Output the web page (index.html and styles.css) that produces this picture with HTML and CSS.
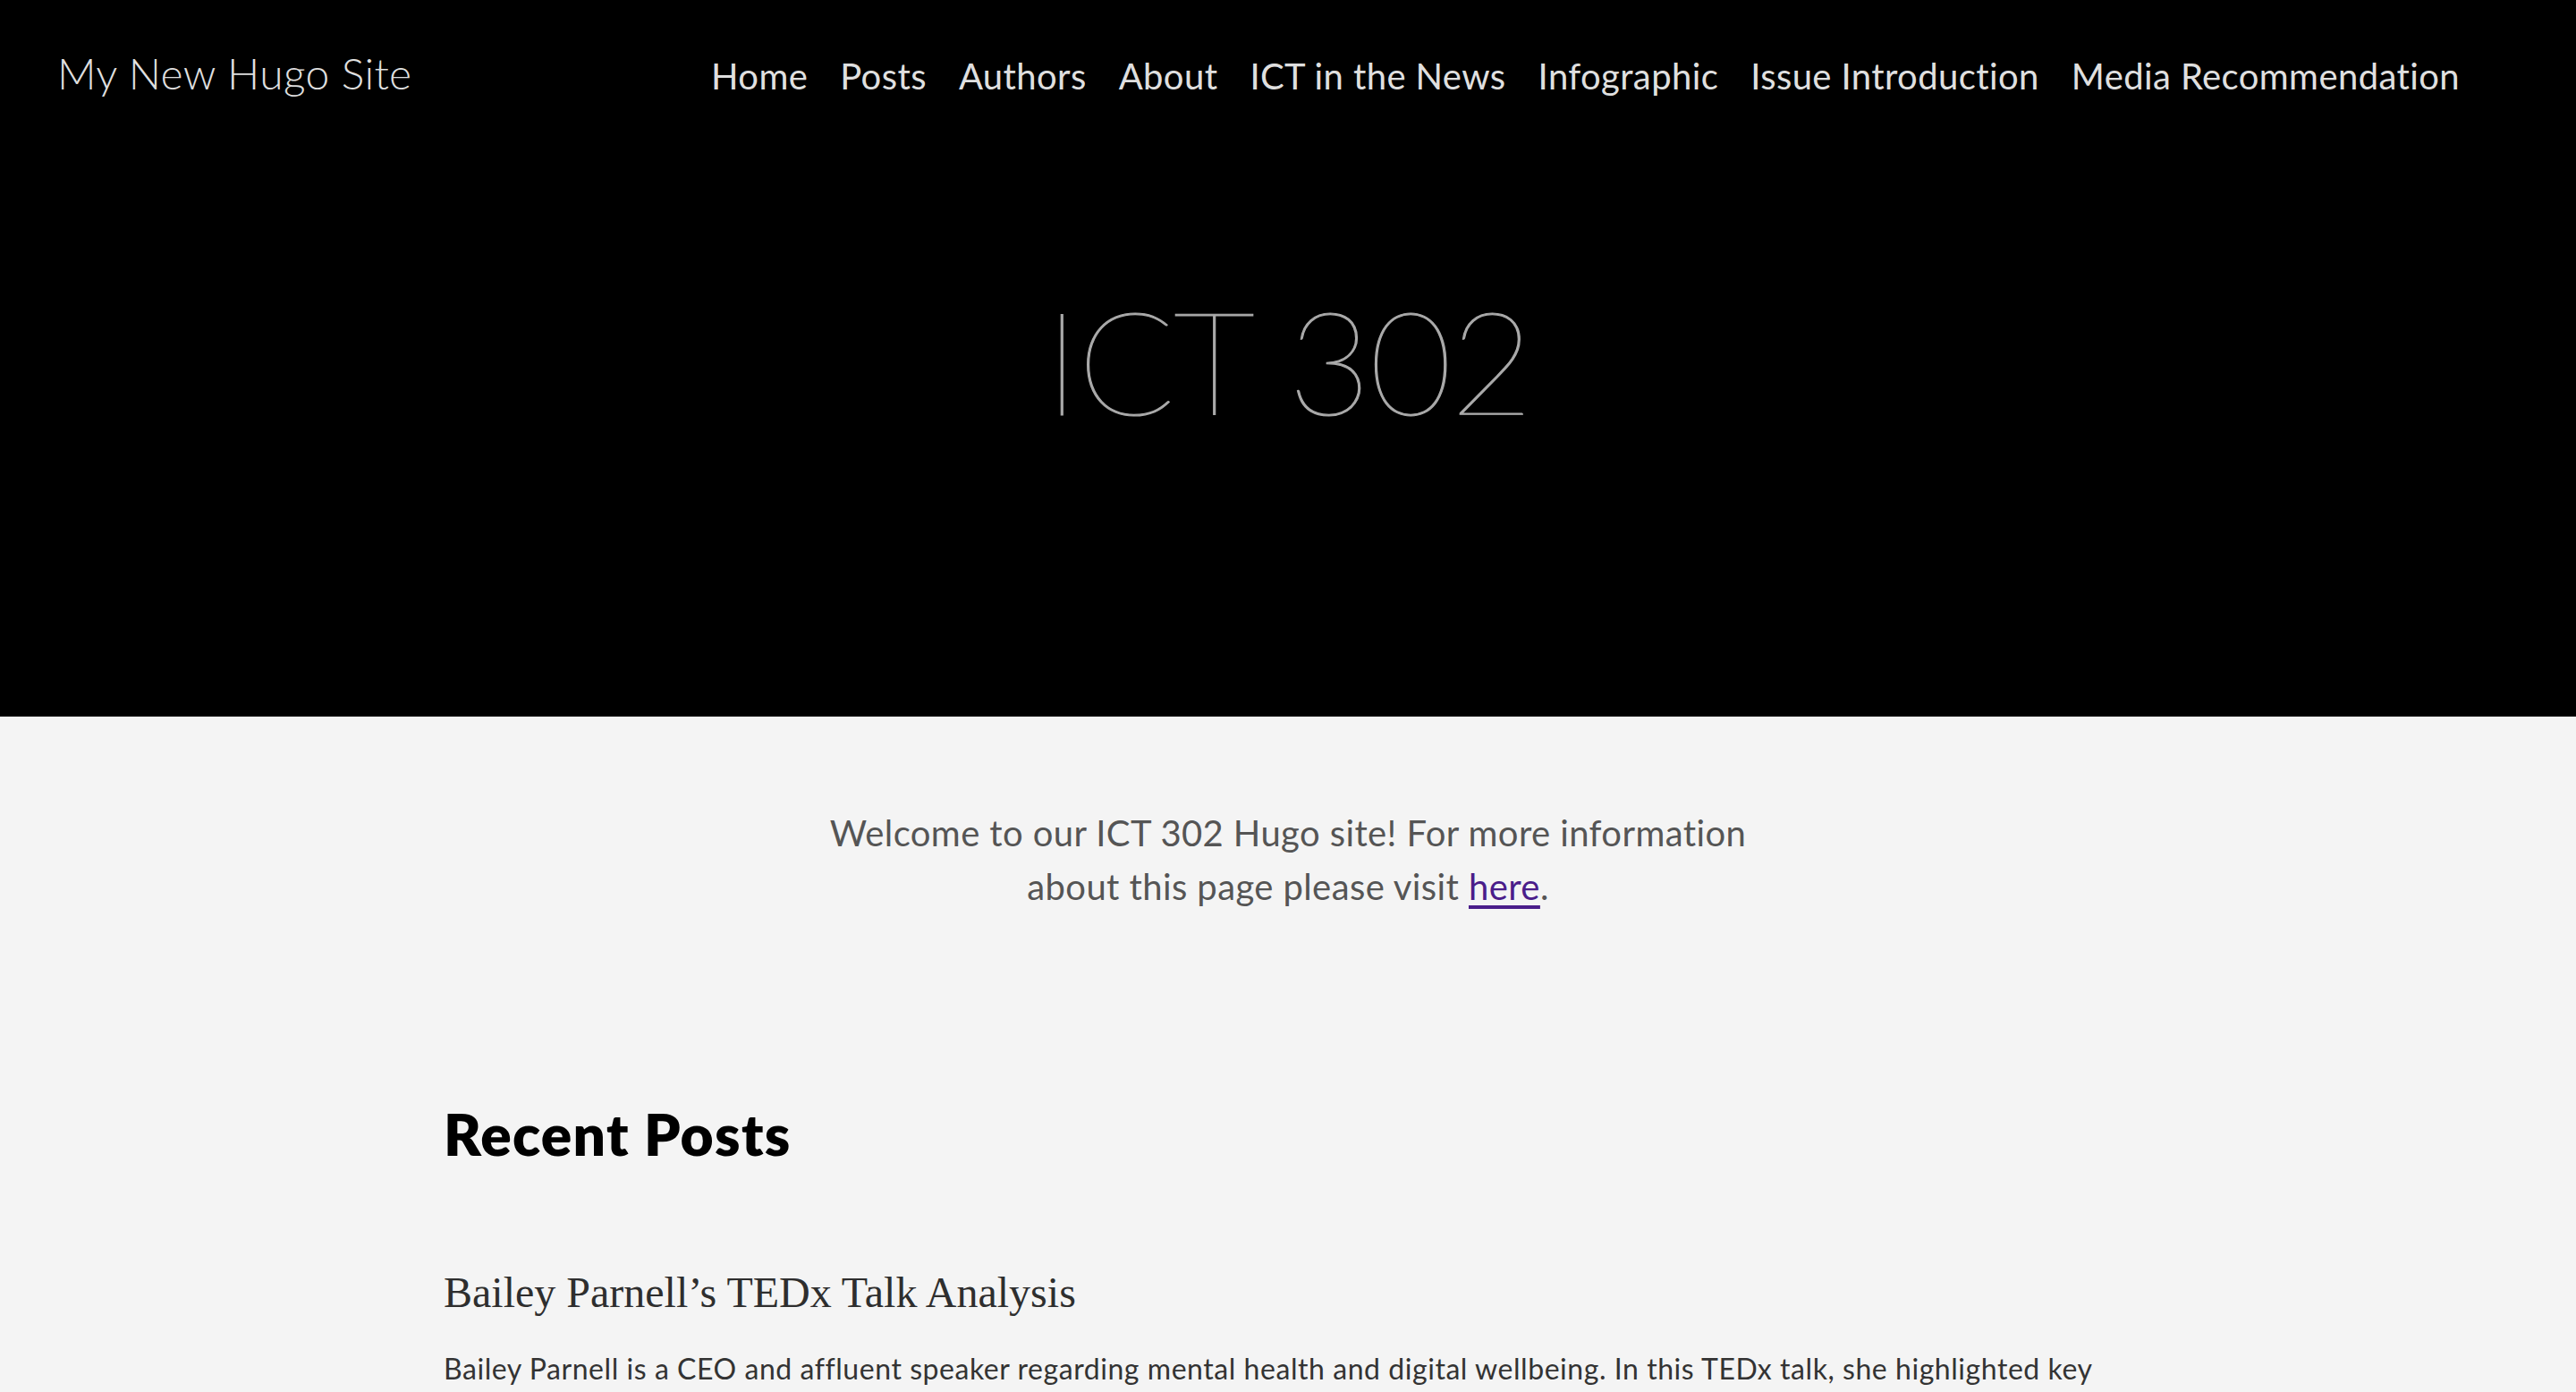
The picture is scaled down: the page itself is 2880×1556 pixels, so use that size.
FILE: index.html
```html
<!DOCTYPE html>
<html lang="en">
<head>
<meta charset="utf-8">
<title>My New Hugo Site</title>
<link rel="stylesheet" href="styles.css">
</head>
<body>
<header class="hero">
  <nav class="topbar">
    <a class="logo" href="#">My New Hugo Site</a>
    <ul class="menu">
      <li><a href="#">Home</a></li>
      <li><a href="#">Posts</a></li>
      <li><a href="#">Authors</a></li>
      <li><a href="#">About</a></li>
      <li><a href="#">ICT in the News</a></li>
      <li><a href="#">Infographic</a></li>
      <li><a href="#">Issue Introduction</a></li>
      <li><a href="#">Media Recommendation</a></li>
    </ul>
  </nav>
  <h1 class="hero-title">ICT 302</h1>
</header>
<main class="main">
  <p class="welcome">Welcome to our ICT 302 Hugo site! For more information about this page please visit <a href="#">here</a>.</p>
  <section class="recent">
    <h2 class="recent-title">Recent Posts</h2>
    <article class="post">
      <h3 class="post-title">Bailey Parnell’s TEDx Talk Analysis</h3>
      <p class="post-summary">Bailey Parnell is a CEO and affluent speaker regarding mental health and digital wellbeing. In this TEDx talk, she highlighted key points about the effects of social media on our mental health.</p>
    </article>
  </section>
</main>
</body>
</html>
```
FILE: styles.css
```css
html, body {
  margin: 0;
  padding: 0;
}
body {
  background: #f4f4f4;
  font-family: Lato, "Noto Sans", sans-serif;
  overflow: hidden;
}
a {
  text-decoration: none;
  color: inherit;
}
.hero {
  background: #000;
  height: 801px;
  display: flex;
  flex-direction: column;
}
.topbar {
  display: flex;
  justify-content: space-between;
  align-items: baseline;
  padding: 52px 130px 0 64px;
}
.logo {
  font-size: 48px;
  font-weight: 300;
  line-height: 1.25;
  letter-spacing: 0.3px;
  color: rgba(255, 255, 255, 0.88);
}
.menu {
  list-style: none;
  margin: 0;
  padding: 0;
  display: flex;
  gap: 36px;
}
.menu a {
  font-size: 40px;
  font-weight: 400;
  line-height: 1.25;
  letter-spacing: 0.4px;
  color: rgba(255, 255, 255, 0.9);
}
.hero-title {
  margin: 190px 0 0;
  text-align: center;
  font-size: 160px;
  font-weight: 200;
  line-height: 1.25;
  letter-spacing: -2px;
  color: #aaaaaa;
  -webkit-text-stroke: 1.2px #aaaaaa;
}
.main {
  display: flex;
  flex-direction: column;
  align-items: center;
}
.welcome {
  box-sizing: border-box;
  width: 1104px;
  margin: 100px 0 0;
  font-size: 40px;
  line-height: 60px;
  letter-spacing: 0.4px;
  color: #555555;
  text-align: center;
}
.welcome a {
  color: #4a1d8a;
  text-decoration: underline;
  text-decoration-thickness: 4px;
  text-underline-offset: 6px;
}
.recent {
  box-sizing: border-box;
  width: 2016px;
  padding: 0 64px;
  margin-top: 207px;
}
.recent-title {
  margin: 0;
  font-size: 64px;
  font-weight: 800;
  line-height: 1.25;
  letter-spacing: 1.3px;
  color: #000;
}
.post-title {
  margin: 107px 0 0;
  font-family: "Liberation Serif", serif;
  font-size: 48px;
  font-weight: 400;
  line-height: 1.25;
  color: #2e2e2e;
}
.post-summary {
  margin: 31px 0 0;
  font-size: 32px;
  line-height: 1.5;
  letter-spacing: 0.55px;
  color: #333333;
}
```
